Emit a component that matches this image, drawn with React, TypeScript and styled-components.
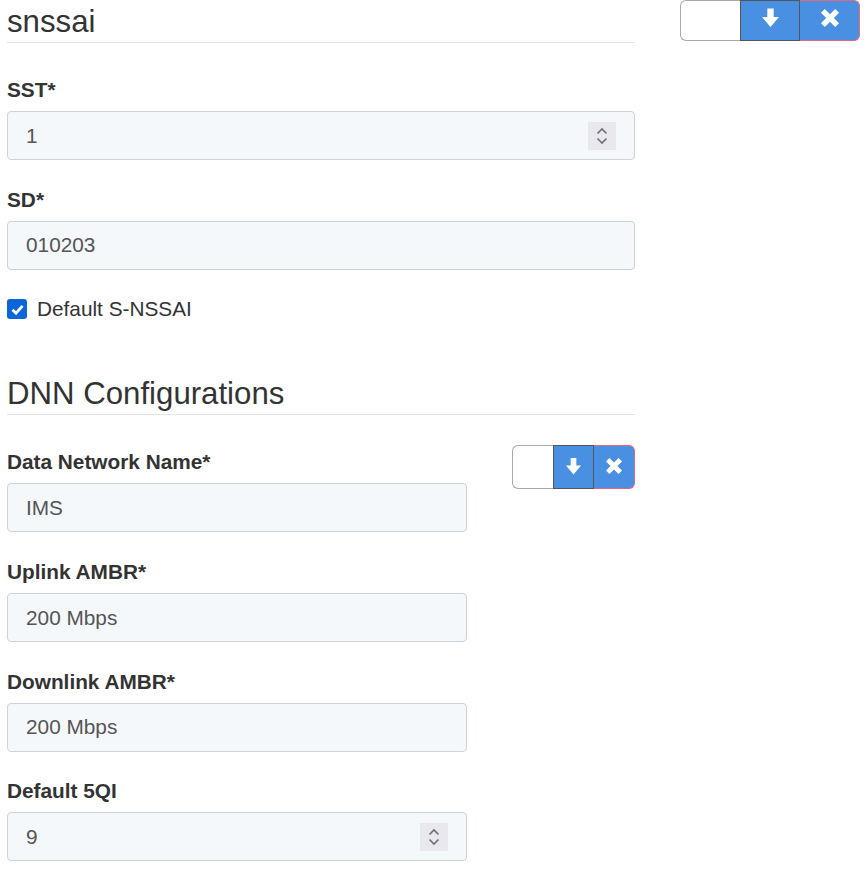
import React from "react";
import styled, { createGlobalStyle } from "styled-components";

const GlobalStyle = createGlobalStyle`
  html, body {
    margin: 0;
    padding: 0;
    background: #ffffff;
  }
  body {
    font-family: "Liberation Sans", Arial, Helvetica, sans-serif;
    color: #333333;
    font-size: 20.8px;
  }
  * { box-sizing: border-box; }
`;

const Page = styled.div`
  padding: 0 6px 0 7px;
  width: 866px;
`;

const ItemRow = styled.div`
  display: flex;
  align-items: flex-start;
`;

const ItemMain = styled.div<{ $w: number; $pt?: number }>`
  width: ${(p) => p.$w}px;
  padding-top: ${(p) => p.$pt ?? 0}px;
  flex: none;
`;

const SectionTitle = styled.h3<{ $mt?: number; $mb: number }>`
  margin: ${(p) => p.$mt ?? 0}px 0 ${(p) => p.$mb}px;
  padding: 5px 0 3px;
  font-size: 31.2px;
  font-weight: 400;
  line-height: 34px;
  color: #333333;
  border-bottom: 1px solid #e5e5e5;
`;

const FieldGroup = styled.div`
  margin-bottom: 24.7px;
`;

const Label = styled.label`
  display: block;
  font-size: 20.8px;
  font-weight: 700;
  line-height: 30px;
  margin-bottom: 6px;
  color: #333333;
`;

const InputBox = styled.div`
  display: flex;
  align-items: center;
  height: 49px;
  padding: 0 18px 0 18px;
  background: #f5f8fb;
  border: 1px solid #cdd1dc;
  border-radius: 4px;
`;

const TextInput = styled.input`
  flex: 1;
  min-width: 0;
  border: none;
  outline: none;
  background: transparent;
  padding: 0;
  font-family: "Liberation Sans", Arial, Helvetica, sans-serif;
  font-size: 20.8px;
  color: #555555;
`;

const Spinner = styled.div`
  flex: none;
  width: 28px;
  height: 28px;
  background: #e9e9ed;
  display: flex;
  align-items: center;
  justify-content: center;
`;

const CheckRow = styled.label`
  display: flex;
  align-items: center;
  gap: 10px;
  height: 30px;
  font-size: 20.8px;
  color: #333333;
`;

const CheckBox = styled.span`
  width: 20px;
  height: 20px;
  border-radius: 3px;
  background: #0b65d8;
  display: flex;
  align-items: center;
  justify-content: center;
  flex: none;
`;

const Toolbar = styled.div<{ $ml: number; $bw: number; $h: number }>`
  display: flex;
  margin-left: ${(p) => p.$ml}px;
  height: ${(p) => p.$h}px;
  flex: none;
  & > * {
    width: ${(p) => p.$bw}px;
  }
`;

const ToolButton = styled.button<{ $kind: "blank" | "down" | "remove"; $pb?: number }>`
  height: 100%;
  padding: 0 0 ${(p) => p.$pb ?? 0}px;
  margin: 0;
  display: flex;
  align-items: center;
  justify-content: center;
  font: inherit;
  cursor: pointer;
  background: ${(p) => (p.$kind === "blank" ? "#ffffff" : "#4a90e2")};
  border: 1px solid
    ${(p) => (p.$kind === "blank" ? "#a8a8a8" : p.$kind === "down" ? "#555555" : "#e8657a")};
  border-left-width: ${(p) => (p.$kind === "remove" ? 0 : 1)}px;
  border-right-width: ${(p) => (p.$kind === "blank" ? 0 : 1)}px;
  border-radius: ${(p) =>
    p.$kind === "blank" ? "6px 0 0 6px" : p.$kind === "remove" ? "0 6px 6px 0" : "0"};
`;

const ArrowDown = ({ w, h }: { w: number; h: number }) => (
  <svg width={w} height={h} viewBox="0 0 16 18">
    <path d="M5 0 H11 V8 H16 L8 17.5 L0 8 H5 Z" fill="#ffffff" />
  </svg>
);

const RemoveIcon = ({ size }: { size: number }) => (
  <svg width={size} height={size} viewBox="0 0 16 16">
    <path
      d="M3.4 0 L8 4.6 L12.6 0 L16 3.4 L11.4 8 L16 12.6 L12.6 16 L8 11.4 L3.4 16 L0 12.6 L4.6 8 L0 3.4 Z"
      fill="#ffffff"
    />
  </svg>
);

const Chevrons = () => (
  <svg width="12" height="18" viewBox="0 0 12 18">
    <path d="M1.5 6.5 L6 2 L10.5 6.5" stroke="#6e6e7a" strokeWidth="1.6" fill="none" />
    <path d="M1.5 11.5 L6 16 L10.5 11.5" stroke="#6e6e7a" strokeWidth="1.6" fill="none" />
  </svg>
);

const CheckMark = () => (
  <svg width="15" height="15" viewBox="0 0 14 14">
    <path d="M2.3 7.2 L5.6 10.4 L11.7 3.6" stroke="#ffffff" strokeWidth="2.6" fill="none" />
  </svg>
);

const Field = ({ label, value, number }: { label: string; value: string; number?: boolean }) => (
  <FieldGroup>
    <Label>{label}</Label>
    <InputBox>
      <TextInput defaultValue={value} readOnly />
      {number && (
        <Spinner>
          <Chevrons />
        </Spinner>
      )}
    </InputBox>
  </FieldGroup>
);

export default function App() {
  return (
    <>
      <GlobalStyle />
      <Page>
        <ItemRow>
          <ItemMain $w={628}>
            <SectionTitle $mb={32}>snssai</SectionTitle>
            <Field label="SST*" value="1" number />
            <Field label="SD*" value="010203" />
            <CheckRow>
              <CheckBox>
                <CheckMark />
              </CheckBox>
              Default S-NSSAI
            </CheckRow>
            <SectionTitle $mt={48} $mb={30}>DNN Configurations</SectionTitle>
            <ItemRow>
              <ItemMain $w={460} $pt={2}>
                <Field label="Data Network Name*" value="IMS" />
                <Field label="Uplink AMBR*" value="200 Mbps" />
                <Field label="Downlink AMBR*" value="200 Mbps" />
                <Field label="Default 5QI" value="9" number />
              </ItemMain>
              <Toolbar $ml={45} $bw={41} $h={44}>
                <ToolButton $kind="blank" aria-label="move up" />
                <ToolButton $kind="down" $pb={2} aria-label="move down">
                  <ArrowDown w={15} h={17} />
                </ToolButton>
                <ToolButton $kind="remove" $pb={3} aria-label="remove">
                  <RemoveIcon size={16} />
                </ToolButton>
              </Toolbar>
            </ItemRow>
          </ItemMain>
          <Toolbar $ml={45} $bw={60} $h={41}>
            <ToolButton $kind="blank" aria-label="move up" />
            <ToolButton $kind="down" $pb={6} aria-label="move down">
              <ArrowDown w={17} h={20} />
            </ToolButton>
            <ToolButton $kind="remove" $pb={6} aria-label="remove">
              <RemoveIcon size={18} />
            </ToolButton>
          </Toolbar>
        </ItemRow>
      </Page>
    </>
  );
}
